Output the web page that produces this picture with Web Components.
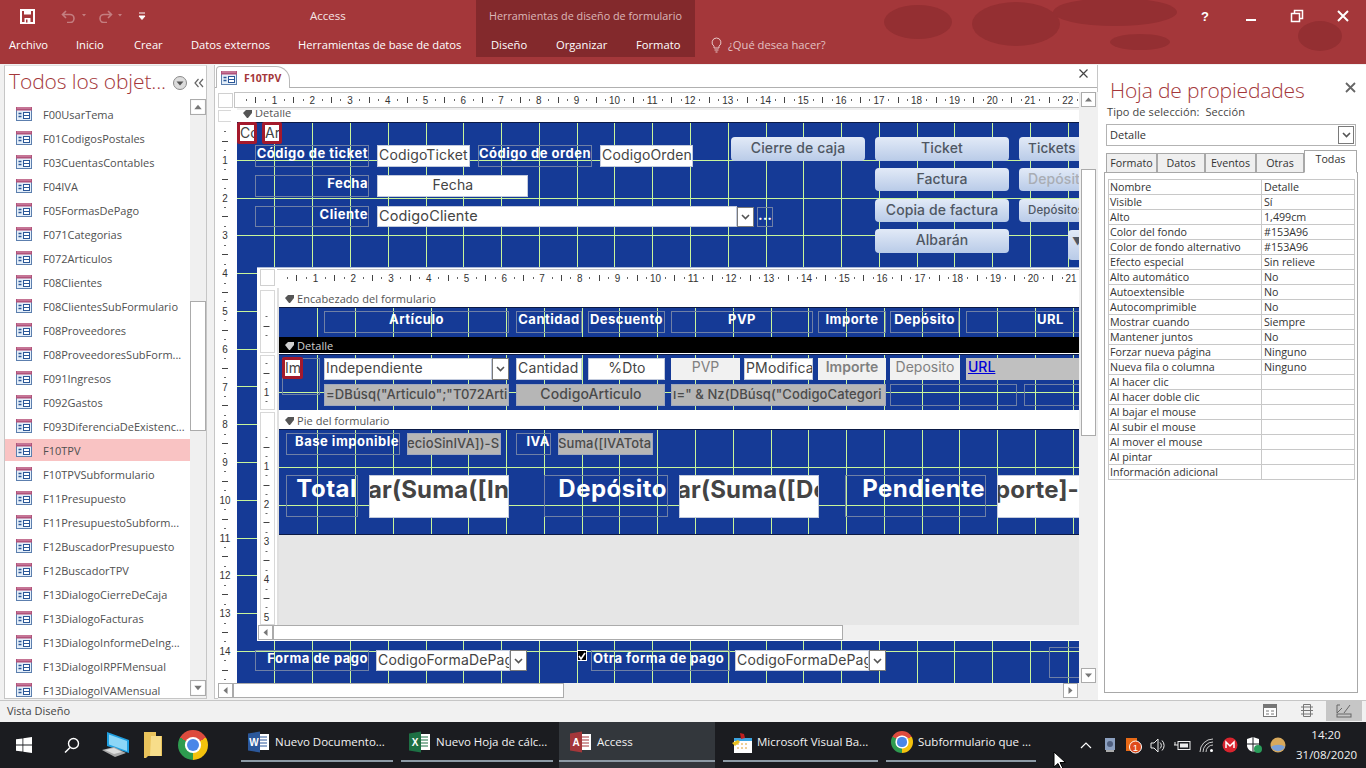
<!DOCTYPE html>
<html lang="es"><head><meta charset="utf-8"><title>Access</title>
<style>html,body{margin:0;padding:0;width:1366px;height:768px;overflow:hidden;background:#f1f1f1;font-family:"Open Sans","Liberation Sans",sans-serif}</style>
</head><body>
<x-app>
<x-titlebar></x-titlebar>
<x-main>
<x-navpane></x-navpane>
<x-doc>
<x-secbar clip>Detalle</x-secbar>
<x-canvas ox="237" oy="122" w="842" h="561" gx="236.6" gy="122" top>
  <x-ctl kind="red" x="237" y="122" w="20" h="22" fs="14">Cc</x-ctl>
  <x-ctl kind="red" x="262" y="122" w="20" h="22" fs="14">Ar</x-ctl>
  <x-ctl kind="label" x="255" y="145" w="114" h="22">Código de ticket</x-ctl>
  <x-ctl kind="field" x="377" y="145" w="93" h="22">CodigoTicket</x-ctl>
  <x-ctl kind="label" x="478" y="145" w="114" h="22">Código de orden</x-ctl>
  <x-ctl kind="field" x="600" y="145" w="93" h="22">CodigoOrden</x-ctl>
  <x-ctl kind="label" x="255" y="175" w="114" h="22">Fecha</x-ctl>
  <x-ctl kind="field" x="377" y="175" w="151" h="22" center>Fecha</x-ctl>
  <x-ctl kind="label" x="255" y="206" w="114" h="21">Cliente</x-ctl>
  <x-ctl kind="field" x="377" y="206" w="360" h="21" fs="14.5">CodigoCliente</x-ctl>
  <x-ctl kind="arrow" x="737" y="207" w="17" h="20"></x-ctl>
  <x-ctl kind="dots" x="757" y="207" w="16" h="20">...</x-ctl>
  <x-ctl kind="btn" x="731" y="137" w="134" h="24">Cierre de caja</x-ctl>
  <x-ctl kind="btn" x="875" y="137" w="134" h="24">Ticket</x-ctl>
  <x-ctl kind="btn" x="1019" y="137" w="70" h="24" left fs="13.5">Tickets</x-ctl>
  <x-ctl kind="btn" x="875" y="168" w="134" h="23">Factura</x-ctl>
  <x-ctl kind="btn" x="1019" y="168" w="70" h="23" left off>Depósito</x-ctl>
  <x-ctl kind="btn" x="875" y="199" w="134" h="23">Copia de factura</x-ctl>
  <x-ctl kind="btn" x="1019" y="199" w="70" h="23" left fs="11.5">Depósitos</x-ctl>
  <x-ctl kind="btn" x="875" y="229" w="134" h="24">Albarán</x-ctl>
  <x-ctl kind="btn" x="1068" y="230" w="20" h="30" left ind="-5" fs="11">▼</x-ctl>

  <x-subform>
    <x-secbar>Encabezado del formulario</x-secbar>
    <x-canvas ox="279" oy="307" w="800" h="30" gx="279.4" gy="307" vonly>
      <x-ctl kind="label" x="324" y="311" w="185" h="22" center>Artículo</x-ctl>
      <x-ctl kind="label" x="516" y="311" w="66" h="22" center>Cantidad</x-ctl>
      <x-ctl kind="label" x="588" y="311" w="77" h="22" center>Descuento</x-ctl>
      <x-ctl kind="label" x="671" y="311" w="142" h="22" center>PVP</x-ctl>
      <x-ctl kind="label" x="818" y="311" w="68" h="22" center>Importe</x-ctl>
      <x-ctl kind="label" x="890" y="311" w="69" h="22" center>Depósito</x-ctl>
      <x-ctl kind="label" x="966" y="311" w="114" h="22" ind="70">URL</x-ctl>
    </x-canvas>
    <x-secbar dark>Detalle</x-secbar>
    <x-canvas ox="279" oy="354" w="800" h="56" gx="279.4" gy="354">
      <x-ctl kind="frame" x="282" y="358" w="38" h="37"></x-ctl>
      <x-ctl kind="red" x="282" y="357" w="21" h="22" fs="14">Im</x-ctl>
      <x-ctl kind="field" x="324" y="358" w="168" h="22">Independiente</x-ctl>
      <x-ctl kind="arrow" x="492" y="358" w="17" h="22"></x-ctl>
      <x-ctl kind="field" x="516" y="358" w="66" h="22">Cantidad</x-ctl>
      <x-ctl kind="field" x="588" y="358" w="77" h="22" center>%Dto</x-ctl>
      <x-ctl kind="light" x="671" y="358" w="69" h="22" center>PVP</x-ctl>
      <x-ctl kind="field" x="744" y="358" w="69" h="22">PModifica</x-ctl>
      <x-ctl kind="light" x="818" y="358" w="68" h="22" center weight="600">Importe</x-ctl>
      <x-ctl kind="light" x="890" y="358" w="70" h="22" center>Deposito</x-ctl>
      <x-ctl kind="url" x="966" y="358" w="114" h="22">URL</x-ctl>
      <x-ctl kind="gray" x="324" y="384" w="185" h="22" fs="13">=DBúsq("Articulo";"T072Arti</x-ctl>
      <x-ctl kind="gray" x="516" y="384" w="149" h="22" center>CodigoArticulo</x-ctl>
      <x-ctl kind="gray" x="671" y="384" w="215" h="22" fs="13">ı=" &amp; Nz(DBúsq("CodigoCategori</x-ctl>
      <x-ctl kind="frame" x="890" y="384" w="127" h="22"></x-ctl>
      <x-ctl kind="frame" x="1024" y="384" w="60" h="22"></x-ctl>
    </x-canvas>
    <x-secbar>Pie del formulario</x-secbar>
    <x-canvas ox="279" oy="428" w="800" h="106" gx="279.4" gy="428" bottom>
      <x-ctl kind="label" x="286" y="432" w="114" h="22">Base imponible</x-ctl>
      <x-ctl kind="gray" x="407" y="432" w="94" h="22" ind="-2" fs="13">ecioSinIVA])-S</x-ctl>
      <x-ctl kind="label" x="516" y="432" w="35" h="22">IVA</x-ctl>
      <x-ctl kind="gray" x="558" y="432" w="95" h="22" ind="-2" fs="13">Suma([IVATota</x-ctl>
      <x-ctl kind="label" x="286" y="474" w="72" h="42" fs="24" lh="26">Total</x-ctl>
      <x-ctl kind="field" x="369" y="474" w="140" h="43" fs="24" bold ind="-3">ar(Suma([In</x-ctl>
      <x-ctl kind="label" x="544" y="474" w="124" h="42" fs="24" lh="26">Depósito</x-ctl>
      <x-ctl kind="field" x="679" y="474" w="140" h="43" fs="24" bold ind="-4">ar(Suma([De</x-ctl>
      <x-ctl kind="label" x="845" y="474" w="141" h="42" fs="24" lh="26">Pendiente</x-ctl>
      <x-ctl kind="field" x="997" y="474" w="90" h="43" fs="24" bold ind="-4">porte]-[</x-ctl>
    </x-canvas>
  </x-subform>

  <x-ctl kind="label" x="255" y="650" w="114" h="21">Forma de pago</x-ctl>
  <x-ctl kind="field" x="376" y="650" w="134" h="21">CodigoFormaDePag</x-ctl>
  <x-ctl kind="arrow" x="510" y="650" w="17" h="21"></x-ctl>
  <x-ctl kind="check" x="577" y="650" w="10" h="11"></x-ctl>
  <x-ctl kind="label" x="591" y="650" w="139" h="21" ind="1">Otra forma de pago</x-ctl>
  <x-ctl kind="field" x="735" y="650" w="134" h="21">CodigoFormaDePag</x-ctl>
  <x-ctl kind="arrow" x="869" y="650" w="17" h="21"></x-ctl>
  <x-ctl kind="frame" x="1049" y="647" w="40" h="31"></x-ctl>
</x-canvas>
</x-doc>
<x-props></x-props>
</x-main>
<x-statusbar></x-statusbar>
<x-taskbar></x-taskbar>
</x-app>

<script>
const UI='"Open Sans","Liberation Sans",sans-serif';
const FORM='Inter,"DejaVu Sans",sans-serif';
const RED='#A4373A';
function shell(el,css,html){el.attachShadow({mode:'open'}).innerHTML=`<style>${css}</style>${html}`;return el.shadowRoot}

const formIcon=(w=16,h=14)=>`<svg width="${w}" height="${h}" viewBox="0 0 16 14"><rect x=".5" y=".5" width="15" height="13" fill="#e4eef9" stroke="#5c7fae"/><rect x="0" y="0" width="16" height="3.5" fill="#b1537a"/><path d="M1 1h14" stroke="#e3a8c0" stroke-width=".8"/><path d="M2.5 6.5h3M2.5 9.5h3" stroke="#2b5797" stroke-width="1.4"/><rect x="7.5" y="5.5" width="6" height="6" fill="#fff" stroke="#2b5797"/><path d="M7.5 8.5h6" stroke="#2b5797"/></svg>`;
const chevron=`<svg width="9" height="6" viewBox="0 0 9 6"><path d="M1 1l3.5 3.5L8 1" fill="none" stroke="#555" stroke-width="1.6"/></svg>`;
const arrowBox=(d,w=15,h=15)=>`<svg width="${w}" height="${h}" viewBox="0 0 15 15"><rect x=".5" y=".5" width="14" height="14" fill="#fff" stroke="#ababab"/><path d="${d}" fill="#777"/></svg>`;
const UP='M4 9.5l3.5-4 3.5 4z',DOWN='M4 5.5l3.5 4 3.5-4z',LEFT='M9.5 4l-4 3.5 4 3.5z',RIGHT='M5.5 4l4 3.5-4 3.5z';

customElements.define('x-app',class extends HTMLElement{constructor(){super();shell(this,`:host{display:flex;flex-direction:column;width:1366px;height:768px;overflow:hidden}`,`<slot></slot>`)}});

customElements.define('x-titlebar',class extends HTMLElement{constructor(){super();
const tabs=[['Archivo',67],['Inicio',58],['Crear',57],['Datos externos',107],['Herramientas de base de datos',193],['Diseño',65],['Organizar',80],['Formato',74]];
shell(this,`:host{display:block;position:relative;height:64px;background:${RED};color:#f7e9e9;font:11.2px/16px ${UI};overflow:hidden;flex:none}
.blobs{position:absolute;left:0;top:0}
.ctx{position:absolute;left:476px;top:0;width:219px;height:57px;background:#83292C}
.r1{position:relative;height:32px;display:flex;align-items:center}
.qat{width:310px;display:flex;align-items:center;padding-left:20px;gap:0;box-sizing:border-box}
.app{width:179px;color:#f5e6e6;font-size:11.5px}
.ctxt{width:230px;color:#dcb7b8;font-size:10.8px;letter-spacing:0;white-space:nowrap}
.win{margin-left:auto;display:grid;grid-template-columns:46px 46px 46px 46px;justify-items:center;width:184px;margin-right:0}
.r2{position:relative;height:26px;padding-left:9px;display:flex;align-items:center}
.t{display:block;font-size:11.2px;color:#fff;white-space:nowrap}
.tell{display:flex;align-items:center;gap:5px;color:#e3c1c2;font-size:11.2px}
`,`<svg class="blobs" width="1366" height="64"><g fill="#942f32"><ellipse cx="918" cy="22" rx="34" ry="17"/><ellipse cx="1016" cy="24" rx="44" ry="22"/><ellipse cx="1115" cy="12" rx="62" ry="14"/><ellipse cx="1320" cy="36" rx="22" ry="15"/><ellipse cx="1140" cy="42" rx="30" ry="8"/></g></svg>
<div class="ctx"></div>
<div class="r1"><div class="qat">
<svg width="15" height="15" viewBox="0 0 15 15"><path d="M1 1h13v13H1z" fill="none" stroke="#fff" stroke-width="2"/><path d="M4 1.5h7v4H4z" fill="#fff"/><path d="M4.5 9h6v5h-6z" fill="#fff"/><path d="M6 10.5h1.5v3H6z" fill="${RED}"/></svg>
<svg style="margin-left:26px" width="28" height="14" viewBox="0 0 28 14"><path d="M5 2L1.5 5.5 5 9M2 5.5h7a4 4 0 0 1 0 8H6" fill="none" stroke="#c47e80" stroke-width="1.6"/><path d="M21 5l2 2.5L25 5z" fill="#c47e80"/></svg>
<svg style="margin-left:8px" width="28" height="14" viewBox="0 0 28 14"><path d="M11 2l3.5 3.5L11 9M14 5.5H7a4 4 0 0 0 0 8h3" fill="none" stroke="#c47e80" stroke-width="1.6"/><path d="M21 5l2 2.5L25 5z" fill="#c47e80"/></svg>
<svg style="margin-left:13px" width="8" height="9" viewBox="0 0 8 9"><path d="M1 1h6M1 4l3 3.5L7 4z" stroke="#fff" fill="#fff"/></svg>
</div>
<div class="app">Access</div><div class="ctxt">Herramientas de diseño de formulario</div>
<div class="win">
<svg width="14" height="14" viewBox="0 0 14 14"><text x="3" y="12" font-family="Liberation Sans" font-weight="700" font-size="13" fill="#fff">?</text></svg>
<svg width="14" height="14" viewBox="0 0 14 14"><path d="M2 11h10" stroke="#fff" stroke-width="2"/></svg>
<svg width="14" height="14" viewBox="0 0 14 14"><path d="M1.5 4.5h8v8h-8zM4.5 4V1.5h8v8H10" fill="none" stroke="#fff" stroke-width="1.5"/></svg>
<svg width="14" height="14" viewBox="0 0 14 14"><path d="M2 2l10 10M12 2L2 12" stroke="#fff" stroke-width="2"/></svg>
</div></div>
<div class="r2">${tabs.map(t=>`<span class="t" style="width:${t[1]}px">${t[0]}</span>`).join('')}
<div class="tell"><svg width="13" height="16" viewBox="0 0 13 16"><path d="M6.5 1a4.5 4.5 0 0 0-2.5 8.2V11h5V9.2A4.5 4.5 0 0 0 6.5 1zM4.5 13h4M5.5 15h2" fill="none" stroke="#e8c8c8" stroke-width="1"/></svg>¿Qué desea hacer?</div></div>`);
}});

customElements.define('x-main',class extends HTMLElement{constructor(){super();shell(this,`:host{display:grid;grid-template-columns:214px 884px 268px;height:636px;flex:none;background:#f1f1f1}`,`<slot></slot>`)}});

customElements.define('x-navpane',class extends HTMLElement{constructor(){super();
const items=['F00UsarTema','F01CodigosPostales','F03CuentasContables','F04IVA','F05FormasDePago','F071Categorias','F072Articulos','F08Clientes','F08ClientesSubFormulario','F08Proveedores','F08ProveedoresSubForm...','F091Ingresos','F092Gastos','F093DiferenciaDeExistenc...','F10TPV','F10TPVSubformulario','F11Presupuesto','F11PresupuestoSubform...','F12BuscadorPresupuesto','F12BuscadorTPV','F13DialogoCierreDeCaja','F13DialogoFacturas','F13DialogoInformeDeIng...','F13DialogoIRPFMensual','F13DialogoIVAMensual'];
shell(this,`:host{display:block;background:#f1f1f1;font-family:${UI}}
.box{margin:1px 7px 1px 4px;height:634px;background:#fff;border:1px solid #c6c6c6;border-top-color:#e0e0e0;box-sizing:border-box;display:flex;flex-direction:column;overflow:hidden}
.head{height:33px;display:flex;align-items:center;padding:0 0 0 4px;flex:none}
h1{margin:-3px 0 0;font:300 21px/28px ${UI};color:${RED};width:163px;white-space:nowrap;letter-spacing:-.1px}
.body{flex:1;display:grid;grid-template-columns:185px 16px;min-height:0}
ul{list-style:none;margin:0;padding:3px 0 0;overflow:hidden}
li{height:24px;display:flex;align-items:center;padding-left:11px;font-size:11px;color:#505050;white-space:nowrap;gap:11px;box-sizing:border-box;border-bottom:1px solid #fff;border-top:1px solid #fff}
li.sel{background:#f9c3c3}
.sb{background:#f0f0f0;display:flex;flex-direction:column;position:relative}
.thumb{margin:186px 0 0;height:130px;background:#fff;border:1px solid #ababab;box-sizing:border-box}
.end{margin-top:auto;height:16px;margin-bottom:2px}
svg{display:block;flex:none}
`,`<div class="box"><div class="head"><h1>Todos los objet...</h1>
<svg width="16" height="16" viewBox="0 0 16 16"><circle cx="8" cy="8" r="6.5" fill="#dcdcdc" stroke="#8a8a8a"/><path d="M4.5 6.5l3.5 4 3.5-4z" fill="#555"/></svg>
<svg style="margin-left:5px" width="12" height="12" viewBox="0 0 12 12"><path d="M5.5 2L2 6l3.5 4M10 2L6.5 6l3.5 4" fill="none" stroke="#666" stroke-width="1.2"/></svg></div>
<div class="body"><ul>${items.map(t=>`<li class="${t=='F10TPV'?'sel':''}">${formIcon()}<span>${t}</span></li>`).join('')}</ul>
<div class="sb">${arrowBox(UP,16,16)}<div class="thumb"></div><div class="end">${arrowBox(DOWN,16,16)}</div></div></div></div>`);
}});

customElements.define('x-ruler',class extends HTMLElement{constructor(){super();shell(this,`:host{display:block;background:#fff;overflow:hidden}svg{display:block}`,`<svg></svg>`)}
connectedCallback(){
const w=+this.getAttribute('w'),x0=+this.getAttribute('x0'),o=+this.getAttribute('origin'),y=7;
let s='',p=37.78;
for(let k=0;k*p/4<w+x0;k++){const px=o-x0+k*p/4; if(px<2||px>w-2)continue; const m=k%4;
 if(m==0&&k>0)s+=`<text x="${px.toFixed(1)}" y="${y+3.5}" text-anchor="middle" font-size="10" font-family="Liberation Sans" fill="#333" textLength="${k/4>9?11:5.5}" lengthAdjust="spacingAndGlyphs">${k/4}</text>`;
 else if(m==2)s+=`<rect x="${Math.round(px)}" y="${y-3}" width="1" height="6" fill="#444"/>`;
 else if(m%2)s+=`<rect x="${Math.round(px)}" y="${y-1}" width="1" height="2" fill="#666"/>`;}
const v=this.shadowRoot.querySelector('svg');v.setAttribute('width',w);v.setAttribute('height',16);v.innerHTML=s;}
});

customElements.define('x-vruler',class extends HTMLElement{constructor(){super();shell(this,`:host{display:block;overflow:hidden;background:#fff}svg{display:block}`,`<svg></svg>`)}
connectedCallback(){
const w=+this.getAttribute('w'),h=+this.getAttribute('h'),top=+this.getAttribute('top');
const spans=this.getAttribute('spans').split(';').map(a=>a.split('-').map(Number));let s='',p=37.78;
const c=w/2-1;
for(const [a,b] of spans){
 for(let k=0;k*p/4<b-a;k++){const y=a-top+k*p/4,m=k%4;
  if(m==0&&k>0)s+=`<text x="${c}" y="${(y+4).toFixed(1)}" text-anchor="middle" font-size="10" font-family="Liberation Sans" fill="#333" textLength="${k/4>9?11:5.5}" lengthAdjust="spacingAndGlyphs">${k/4}</text>`;
  else if(m==2)s+=`<rect x="${c-3}" y="${Math.round(y)}" width="6" height="1" fill="#444"/>`;
  else if(m%2)s+=`<rect x="${c-1}" y="${Math.round(y)}" width="2" height="1" fill="#666"/>`;}
}
(this.getAttribute('boxes')||'').split(';').filter(Boolean).forEach(r=>{const [a,b]=r.split('-').map(Number);s+=`<rect x=".5" y="${a-top+.5}" width="${w-1}" height="${b-a-1}" fill="none" stroke="#d8d8d8"/>`});
const v=this.shadowRoot.querySelector('svg');v.setAttribute('width',w);v.setAttribute('height',h);v.innerHTML=s;}
});

customElements.define('x-secbar',class extends HTMLElement{constructor(){super();shell(this,`:host{display:flex;align-items:center;height:19px;background:#fff;color:#555;font:11px/14px ${UI};overflow:hidden;gap:3px;padding:3px 0 0 6px;box-sizing:border-box;letter-spacing:.05px}
:host([dark]){background:#000;color:#d0d0d0;height:16px;padding-top:2px;margin-bottom:1px}
:host([clip]){height:14px;padding:0 0 0 6px;margin:0;align-items:flex-start;border-top:2px solid #f1f1f1;box-sizing:border-box}
:host([clip]) span{margin-top:-4px} :host([clip]) svg{margin-top:0}
svg{flex:none}`,`<svg width="9" height="8" viewBox="0 0 9 8"><path d="M0 3l3-3h6v3L5 8H4z" fill="currentColor"/></svg><span><slot></slot></span>`)}});

customElements.define('x-canvas',class extends HTMLElement{constructor(){super();shell(this,`:host{display:block;position:relative;overflow:hidden;background:#153A96;box-sizing:border-box}
:host([top]) {border-top:0} svg{position:absolute;left:0;top:0;display:block}`,`<svg shape-rendering="crispEdges"></svg><slot></slot>`)}
connectedCallback(){
const w=+this.getAttribute('w'),h=+this.getAttribute('h'),ox=+this.getAttribute('ox'),oy=+this.getAttribute('oy'),gx=+this.getAttribute('gx'),gy=+this.getAttribute('gy');
this.style.width=w+'px';this.style.height=h+'px';
const p=37.78;let s='';
for(let i=1;gx+i*p<ox+w;i++){const x=Math.round(gx+i*p)-ox;s+=`<rect x="${x}" y="0" width="1" height="${h}" fill="#c9f59a"/>`}
if(!this.hasAttribute('vonly'))for(let i=1;gy+i*p<oy+h;i++){const y=Math.round(gy+i*p)-oy;s+=`<rect x="0" y="${y}" width="${w}" height="1" fill="#c9f59a"/>`}
s+=`<rect x="0" y="0" width="${w}" height="1" fill="#0b1a45"/>`;
if(this.hasAttribute('bottom'))s+=`<rect x="0" y="${h-1}" width="${w}" height="1" fill="#0b1a45"/>`;
const v=this.shadowRoot.querySelector('svg');v.setAttribute('width',w);v.setAttribute('height',h);v.innerHTML=s;}
});

customElements.define('x-ctl',class extends HTMLElement{constructor(){super();shell(this,`:host{position:absolute;display:block;box-sizing:border-box;overflow:hidden;white-space:nowrap;font:400 14px/20px ${FORM};color:#444;}
:host([kind=label]){border:1px solid #6f80a6;color:#fff;font-weight:700;text-align:right;font-size:13px;line-height:15px;padding-right:0;background:transparent;letter-spacing:.5px}
:host([kind=field]){background:#fff;border:1px solid #c3cbdd;padding-left:1px;line-height:17px;letter-spacing:.15px}
:host([kind=gray]){background:#b6b6b6;color:#4a4a4a;padding-left:1px;line-height:18px;letter-spacing:.1px;border:1px solid #a0a8bc;font-weight:500}
:host([kind=light]){background:#f1f1f1;color:#808080;line-height:18px}
:host([kind=url]){background:#c0c0c0;color:#0000d8;text-decoration:underline;padding-left:2px;line-height:18px;font-weight:500}
:host([kind=red]){background:#fff;border:3px solid #a3192c;border-radius:2px;line-height:16px;color:#444;padding-left:0}
:host([kind=frame]){border:1px solid #6f80a6}
:host([kind=arrow]){background:#fff;border:1px solid #7a7a7a;display:flex;align-items:center;justify-content:center}
:host([kind=dots]){border:1px solid #6f80a6;color:#fff;font-weight:700;text-align:center;line-height:14px}
:host([kind=check]){background:#000;border:1px solid #fff;display:flex;align-items:center;justify-content:center}
:host([kind=btn]){background:linear-gradient(#e2eaf7,#b9cbe8);border-radius:4px;text-align:center;color:#4f5763;font-weight:500;line-height:22px;letter-spacing:.1px}
:host([kind=btn][left]){text-align:left;padding-left:9px}
:host([kind=btn][off]){color:#a9adb4}
:host([center]){text-align:center}
:host([bold]){font-weight:700;line-height:28px;color:#444}
svg{display:block}`,`<slot></slot>`)}
connectedCallback(){
const c=this.closest('x-canvas'),ox=+c.getAttribute('ox'),oy=+c.getAttribute('oy'),g=a=>this.getAttribute(a);
Object.assign(this.style,{left:(g('x')-ox)+'px',top:(g('y')-oy)+'px',width:g('w')+'px',height:g('h')+'px'});
if(g('fs'))this.style.fontSize=g('fs')+'px';
if(g('lh'))this.style.lineHeight=g('lh')+'px';
if(g('weight'))this.style.fontWeight=g('weight');
if(g('ind')){this.style.textIndent=g('ind')+'px';if(g('kind')=='label')this.style.textAlign='left'}
if(g('kind')=='arrow')this.shadowRoot.innerHTML+=chevron;
if(g('kind')=='check')this.shadowRoot.innerHTML+=`<svg width="8" height="8" viewBox="0 0 8 8"><path d="M1 4l2 3 4-6" fill="none" stroke="#fff" stroke-width="1.6"/></svg>`;
}});

customElements.define('x-subform',class extends HTMLElement{constructor(){super();shell(this,`:host{position:absolute;left:20px;top:145px;width:822px;height:374px;background:#fff;border-top:1px solid #a9b8d8;box-sizing:border-box;display:grid;grid-template-columns:22px 800px;grid-template-rows:20px 337px 15px}
.corner{margin:1px 4px 2px 3px;border:1px solid #d0d0d0}
.rul{border-bottom:1px solid #c4c4c4;border-top:1px solid #c4c4c4;margin-top:1px;margin-left:-2px;height:18px;box-sizing:border-box;padding-top:1px}
.left{padding-left:3px;border-right:2px solid #e0e0e0;box-sizing:border-box}
.right{display:block}
.gray{height:90px;background:#e6e6e6;margin-top:0}
.h{grid-column:1 / 3;padding-left:1px;display:flex;background:#fff}
.h .track{flex:1;background:#f0f0f0}
.thumb{height:15px;width:570px;background:#fff;border:1px solid #ababab;box-sizing:border-box;margin-left:0}
`,`<div class="corner"></div><div class="rul"><x-ruler w="802" x0="277" origin="277.6"></x-ruler></div>
<div class="left"><x-vruler w="15" h="337" top="288" spans="307-337;354-410;428-625" boxes="290-353;355-410;412-625"></x-vruler></div>
<div class="right"><slot></slot><div class="gray"></div></div>
<div class="h">${arrowBox(LEFT)}<div class="thumb"></div><div class="track"></div></div>`)}});

customElements.define('x-doc',class extends HTMLElement{constructor(){super();shell(this,`:host{display:flex;flex-direction:column;background:#f1f1f1;font-family:${UI};border-left:1px solid #c6c6c6;border-right:1px solid #c6c6c6;border-bottom:1px solid #c6c6c6;box-sizing:border-box;margin:1px 0;height:634px;width:884px}
.tabs{height:22px;background:#fff;border-bottom:1px solid #b0b0b0;display:flex;align-items:flex-end;flex:none;position:relative}
.tab{margin-left:1px;width:74px;height:22px;box-sizing:border-box;background:#fff;border:1px solid #b8b8b8;border-bottom:0;border-radius:4px 14px 0 0;display:flex;align-items:center;gap:7px;padding-left:4px;color:${RED};font-size:10.5px;font-weight:700;margin-bottom:-1px}
.x{position:absolute;right:8px;top:3px}
.grid{flex:1;display:grid;grid-template-columns:16px 845px 19px;grid-template-rows:16px 575px 16px;padding:4px 0 0 3px;background:#fff;min-height:0}
.corner{border:1px solid #d0d0d0;margin:1px 1px 0 0;background:#fff}
.rul{border-top:1px solid #c4c4c4;border-bottom:1px solid #c4c4c4;height:16px;box-sizing:border-box;border-left:1px solid #c4c4c4;overflow:hidden}
.vs{grid-row:1 / 3;grid-column:3;background:#f0f0f0;display:flex;flex-direction:column;padding-left:2px;box-sizing:border-box}
.vs .th{margin-top:62px;height:267px;background:#fff;border:1px solid #ababab;box-sizing:border-box;width:15px}
.vs .e{margin-top:auto}
.lr{border-right:3px solid #fff;box-sizing:content-box;padding-top:2px;overflow:hidden}
.mid{min-width:0;overflow:hidden;padding-left:3px;width:842px}
.hs{grid-column:1 / 4;display:flex;background:#f0f0f0;padding-left:0}
.hs .th{width:331px;background:#fff;border:1px solid #ababab;box-sizing:border-box;height:15px}
.hs .tr{flex:1}
.pad{width:20px}
svg{display:block;flex:none}
`,`<div class="tabs"><div class="tab">${formIcon()}<span>F10TPV</span></div>
<svg class="x" width="11" height="11" viewBox="0 0 11 11"><path d="M1.5 1.5l8 8M9.5 1.5l-8 8" stroke="#444" stroke-width="1.2"/></svg></div>
<div class="grid"><div class="corner"></div><div class="rul"><x-ruler w="845" x0="234" origin="235.6"></x-ruler></div>
<div class="vs">${arrowBox(UP)}<div class="th"></div><div class="e">${arrowBox(DOWN)}</div></div>
<div class="lr"><x-vruler w="16" h="573" top="110" spans="122-683" boxes="110-122"></x-vruler></div>
<div class="mid"><slot></slot></div>
<div class="hs">${arrowBox(LEFT)}<div class="th"></div><div class="tr"></div>${arrowBox(RIGHT)}<div class="pad"></div></div></div>`)}});

customElements.define('x-props',class extends HTMLElement{constructor(){super();
const rows=[['Nombre','Detalle'],['Visible','Sí'],['Alto','1,499cm'],['Color del fondo','#153A96'],['Color de fondo alternativo','#153A96'],['Efecto especial','Sin relieve'],['Alto automático','No'],['Autoextensible','No'],['Autocomprimible','No'],['Mostrar cuando','Siempre'],['Mantener juntos','No'],['Forzar nueva página','Ninguno'],['Nueva fila o columna','Ninguno'],['Al hacer clic',''],['Al hacer doble clic',''],['Al bajar el mouse',''],['Al subir el mouse',''],['Al mover el mouse',''],['Al pintar',''],['Información adicional','']];
shell(this,`:host{display:block;background:#fff;font:10.7px/15px ${UI};color:#333;box-sizing:border-box;padding:0 0 0 6px;margin-top:1px;height:635px}
.h{display:flex;align-items:center;height:40px;padding:10px 0 0 6px;width:252px;box-sizing:border-box}
h2{margin:0;font:300 21px/28px ${UI};color:${RED};flex:1;white-space:nowrap;letter-spacing:-.15px}
.x{margin-top:-6px;margin-right:0}
.t{height:15px;padding-left:3px;font-size:11px;letter-spacing:.1px;color:#444;margin-top:-1px;margin-bottom:1px}
.combo{margin:5px 0 7px 2px;width:250px;height:22px;border:1px solid #b3b3b3;box-sizing:border-box;display:flex;align-items:center;padding:0 0 2px 3px;font-size:11px}
.combo b{font-weight:400;flex:1}.ar{width:16px;height:18px;border:1px solid #7a7a7a;box-sizing:border-box;display:flex;align-items:center;justify-content:center;margin:2px 1px 0 0}
.tabs{display:flex;height:19px;margin-left:2px;align-items:flex-end;position:relative;z-index:1}
.tb{height:19px;box-sizing:border-box;background:#efefef;border:1px solid #a8a8a8;border-bottom:0;display:flex;align-items:center;justify-content:center;font-size:10.7px}
.tb.on{background:#fff;height:23px;border-bottom:1px solid #fff;margin-bottom:-1px;padding-bottom:5px}
.panel{border:1px solid #a8a8a8;height:521px;width:254px;box-sizing:border-box;padding:6px 3px;background:#fff}
.tbl{border:1px solid #c8c8c8;border-bottom:0;display:grid;grid-template-columns:152px 1fr;width:247px;box-sizing:border-box}
.c{height:15px;box-sizing:border-box;border-bottom:1px solid #c8c8c8;padding-left:1px;line-height:14px;white-space:nowrap;overflow:hidden}
.c.v{border-left:1px solid #c8c8c8;padding-left:2px}
`,`<div class="h"><h2>Hoja de propiedades</h2><svg class="x" width="11" height="11" viewBox="0 0 11 11"><path d="M1 1l9 9M10 1l-9 9" stroke="#666" stroke-width="1.8"/></svg></div>
<div class="t">Tipo de selección:&nbsp; Sección</div>
<div class="combo"><b>Detalle</b><div class="ar">${chevron}</div></div>
<div class="tabs"><div class="tb" style="width:51px">Formato</div><div class="tb" style="width:48px">Datos</div><div class="tb" style="width:51px">Eventos</div><div class="tb" style="width:48px">Otras</div><div class="tb on" style="width:53px">Todas</div></div>
<div class="panel"><div class="tbl">${rows.map(r=>`<div class="c">${r[0]}</div><div class="c v">${r[1]}</div>`).join('')}</div></div>`);
}});

customElements.define('x-statusbar',class extends HTMLElement{constructor(){super();shell(this,`:host{display:flex;align-items:center;height:22px;flex:none;background:#f1f1f1;border-top:1px solid #c6c6c6;box-sizing:border-box;color:#444;font:11px/16px ${UI};padding:0 0 2px 7px}
.sp{flex:1}.i{width:36px;height:21px;display:flex;align-items:center;justify-content:center;margin-left:1px}.i.on{background:#c6c6c6;margin-right:4px}`,`<span>Vista Diseño</span><span class="sp"></span>
<div class="i"><svg width="14" height="13" viewBox="0 0 14 13"><rect x=".5" y=".5" width="13" height="12" fill="#fff" stroke="#777"/><rect x="1" y="1" width="12" height="3" fill="#777"/><path d="M3 7h3M8 7h3M3 10h3M8 10h3" stroke="#777"/></svg></div>
<div class="i"><svg width="12" height="13" viewBox="0 0 12 13"><path d="M2.5.5h7v12h-7zM0 3h12M0 6.500h12M0 10h12" fill="none" stroke="#777"/></svg></div>
<div class="i on"><svg width="16" height="14" viewBox="0 0 16 14"><path d="M1 1v8M1 1h3M1 9l5-5M8 9L14 1" fill="none" stroke="#666"/><rect x="1" y="10" width="14" height="3" fill="none" stroke="#666"/></svg></div>`)}});

customElements.define('x-chrome',class extends HTMLElement{constructor(){super();shell(this,`:host{display:block;width:var(--s,30px);height:var(--s,30px);border-radius:50%;background:conic-gradient(#dd4b3e 0 60deg,#f4c20d 60deg 180deg,#2e9b4f 180deg 300deg,#dd4b3e 300deg);position:relative;flex:none}
div{position:absolute;inset:29%;background:#4a86e8;border-radius:50%;box-shadow:0 0 0 calc(var(--s,30px)*.07) #fff}`,`<div></div>`)}});

customElements.define('x-taskbar',class extends HTMLElement{constructor(){super();
const app=(w,ml,pl,icon,text,cls='')=>`<div class="app ${cls}" style="width:${w}px;margin-left:${ml}px;padding-left:${pl}px">${icon}<span>${text}</span></div>`;
const doc=(bg,l,fs=11)=>`<svg width="22" height="22" viewBox="0 0 22 22"><rect x="8" y="3" width="13" height="16" fill="#fff"/><path d="M11 6h8M11 9h8M11 12h8M11 15h8" stroke="${bg}"/><path d="M0 2.500l12-2v21l-12-2z" fill="${bg}"/><text x="6" y="15" text-anchor="middle" font-size="10" font-weight="700" font-family="Liberation Sans" fill="#fff">${l}</text></svg>`;
shell(this,`:host{display:flex;align-items:center;height:46px;flex:none;background:#1b1c20;color:#f2f2f2;font:11.5px/16px ${UI};position:relative;overflow:hidden}
.app{height:46px;display:flex;align-items:center;gap:5px;box-sizing:border-box;padding-bottom:6px;position:relative;white-space:nowrap}
.app::after{content:"";position:absolute;left:0;right:0;top:38px;height:2px;background:#8d9aa5}
.app.on{background:#33373c}.app.on::after{background:#8d9aa5}
.s{flex:none;display:block}
.w{width:16px;margin-left:16px}.f{margin-left:24px}
.tray{margin-left:auto;display:grid;grid-auto-flow:column;grid-auto-columns:24px;justify-items:center;align-items:center}
.clock{text-align:center;width:60px;font-size:11.5px;line-height:20px;margin-left:6px;margin-right:10px;white-space:nowrap}
.cur{position:absolute;left:1053px;top:29px}
`,`<svg class="s w" width="16" height="16" viewBox="0 0 16 16" fill="#fff"><path d="M0 2.300l6.500-.9v6.200H0zM7.300 1.300L16 0v7.600H7.300zM0 8.400h6.500v6.200L0 13.700zM7.300 8.400H16V16l-8.700-1.300z"/></svg>
<svg class="s" style="margin-left:32px" width="16" height="16" viewBox="0 0 16 16"><circle cx="9.500" cy="6.500" r="5" fill="none" stroke="#fff" stroke-width="1.400"/><path d="M6 10.500L1 15.500" stroke="#fff" stroke-width="1.500"/></svg>
<svg class="s" style="margin-left:19px" width="32" height="32" viewBox="0 0 32 32"><path d="M8 3l22 8v13L8 17z" fill="#1f9fe0"/><path d="M10 5.500l18 6.500v10L10 15.500z" fill="#8cd6f7"/><path d="M3 21l12-3 12 6-11 4z" fill="#aaa"/><path d="M6 21l9-2 8 4-8 2z" fill="#ddd"/></svg>
<svg class="s" style="margin-left:11px" width="22" height="30" viewBox="0 0 22 30"><path d="M2 2h12v4h6v20H6l-2 2H2z" fill="#e9c35c"/><path d="M9 6h10v20H8z" fill="#f7dd8a"/></svg>
<x-chrome class="s" style="--s:30px;margin-left:14px"></x-chrome>
${app(152,33,7,doc('#2b579a','W'),'Nuevo Documento...')}
${app(152,8,8,doc('#1d7044','X'),'Nuevo Hoja de cálc...')}
${app(156,6,11,doc('#a4373a','A'),'Access','on')}
${app(155,8,9,`<svg width="20" height="24" viewBox="0 0 20 24"><rect x="2" y="8" width="18" height="15" fill="#fff"/><rect x="2" y="8" width="18" height="3" fill="#3ba3e0"/><path d="M5 14h2M9 14h2M13 14h2M5 18h2M9 18h2M13 18h2" stroke="#e0a030"/><path d="M8 3l4 1 1 4-4 1z" fill="#c02020"/><path d="M0 13l6-3 2 2-5 4z" fill="#e8c020"/></svg>`,'Microsoft Visual Ba...')}
${app(150,8,5,`<x-chrome style="--s:22px"></x-chrome>`,'Subformulario que ...')}
<div class="tray">
<svg width="12" height="8" viewBox="0 0 12 8"><path d="M1 7l5-5 5 5" fill="none" stroke="#fff" stroke-width="1.200"/></svg>
<svg width="14" height="16" viewBox="0 0 14 16"><rect x="2" y="1" width="10" height="12" fill="#8ca0c0"/><circle cx="7" cy="7" r="3" fill="#506080"/><rect x="3" y="13" width="8" height="2" fill="#aaa"/></svg>
<svg width="16" height="18" viewBox="0 0 16 18"><path d="M0 2h11v13H0z" fill="#e86a17"/><circle cx="9.500" cy="11" r="6" fill="#e04a1a" stroke="#fff"/><text x="9.500" y="14.500" text-anchor="middle" font-size="9.500" fill="#fff" font-family="Liberation Sans">1</text></svg>
<svg width="17" height="15" viewBox="0 0 17 15"><path d="M1 5h3l4-4v13l-4-4H1z" fill="none" stroke="#eee"/><path d="M10 4.500a4 4 0 0 1 0 6M12 2.500a7 7 0 0 1 0 10" fill="none" stroke="#eee"/></svg>
<svg width="17" height="12" viewBox="0 0 17 12"><rect x="4" y="2.500" width="12" height="8" fill="none" stroke="#eee"/><rect x="6" y="4.500" width="8" height="4" fill="#eee"/><path d="M0 6h4M1 3v3" stroke="#eee"/></svg>
<svg width="15" height="15" viewBox="0 0 15 15"><path d="M1 14a13 13 0 0 1 13-13M4 14a10 10 0 0 1 10-10M7 14a7 7 0 0 1 7-7" fill="none" stroke="#ccc"/><circle cx="12.500" cy="12.500" r="1.500" fill="#fff"/></svg>
<svg width="16" height="16" viewBox="0 0 16 16"><circle cx="8" cy="8" r="7.500" fill="#d9242e"/><path d="M4 11V5l4 4 4-4v6" fill="none" stroke="#fff" stroke-width="1.500"/></svg>
<svg width="17" height="18" viewBox="0 0 17 18"><path d="M7 1l6 2v6c0 4-3 6-6 7-3-1-6-3-6-7V3z" fill="#fff"/><path d="M7 1v15M1 8h12" stroke="#1b1c20"/><circle cx="12" cy="13" r="4" fill="#2a9d5a"/></svg>
<svg width="16" height="16" viewBox="0 0 16 16"><circle cx="8" cy="8" r="7.500" fill="#d8a95c"/><path d="M1 10a8 8 0 0 0 14 0c-3-3-10-3-14 0z" fill="#7aa0d8"/></svg>
</div>
<div class="clock">14:20<br>31/08/2020</div>
<svg class="cur" width="14" height="20" viewBox="0 0 14 20"><path d="M1 1v15l4-3.500 3 6 2-1-3-6h5.500z" fill="#fff" stroke="#000"/></svg>`);
}});
</script>
</body></html>
